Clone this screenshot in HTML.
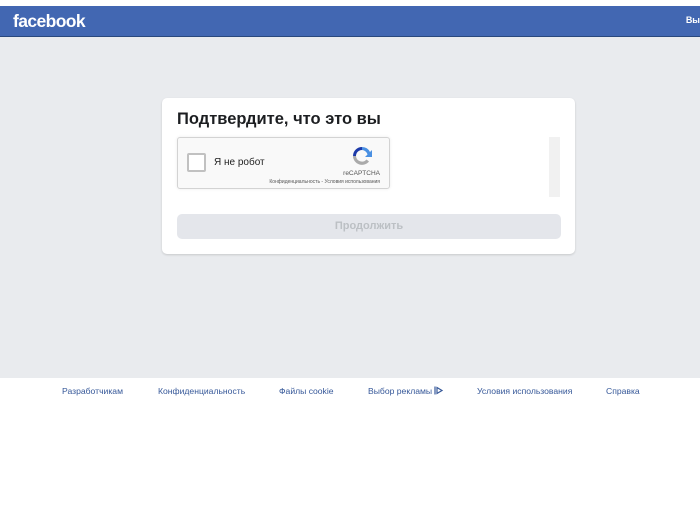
<!DOCTYPE html>
<html><head><meta charset="utf-8"><style>
*{margin:0;padding:0;box-sizing:border-box}
body{width:700px;height:509px;background:#fff;font-family:"Liberation Sans","Noto Sans CJK SC",sans-serif;position:relative;overflow:hidden}
.top{position:absolute;left:0;top:0;width:700px;height:6px;background:#fff}
.bar{position:absolute;left:0;top:6px;width:700px;height:31px;background:#4267b2;border-bottom:1px solid #29487d}
.logo{position:absolute;left:13px;top:5px;color:#fff;font-weight:bold;font-size:17.5px;letter-spacing:-0.6px}
.vy{position:absolute;right:0;top:9px;color:#fff;font-size:9px;font-weight:bold}
.gray{position:absolute;left:0;top:37px;width:700px;height:341px;background:#e9ebee}
.card{position:absolute;left:162px;top:98px;width:413px;height:156px;background:#fff;border-radius:5px;box-shadow:0 1px 2px rgba(0,0,0,.15)}
h1{position:absolute;left:15px;top:12px;font-size:16.5px;font-weight:bold;color:#1c1e21}
.rc{position:absolute;left:15px;top:39px;width:213px;height:52px;background:#f9f9f9;border:1px solid #d3d3d3;border-radius:3px;box-shadow:0 0 3px rgba(0,0,0,.08)}
.cb{position:absolute;left:9px;top:15px;width:19px;height:19px;background:#fff;border:2px solid #c1c1c1;border-radius:2px}
.rt{position:absolute;left:36px;top:19px;font-size:10px;color:#222}
.rl{position:absolute;right:9px;top:32px;font-size:6.5px;color:#555}
.rs{position:absolute;right:9px;top:41px;font-size:5px;color:#555}
.sb{position:absolute;left:387px;top:39px;width:11px;height:60px;background:#f1f1f1}
.btn{position:absolute;left:15px;top:116px;width:384px;height:25px;background:#e4e6eb;border-radius:5px;color:#bcc0c4;font-size:11px;font-weight:bold;text-align:center;line-height:25px}
.foot{position:absolute;top:386px;font-size:8.6px;color:#365899;white-space:nowrap}
</style></head><body>
<div class="top"></div>
<div class="bar"><div class="logo">facebook</div><div class="vy">Вы</div></div>
<div class="gray"></div>
<div class="card">
<h1>Подтвердите, что это вы</h1>
<div class="rc"><div class="cb"></div><div class="rt">Я не робот</div>
<svg style="position:absolute;left:172px;top:6px" width="24" height="24" viewBox="0 0 24 24"><path d="M12 3a9 9 0 0 1 8 5l2-2v7h-7l2.5-2.5A6 6 0 0 0 12 6z" fill="#4a90e2"/><path d="M12 3A9 9 0 0 0 3 12h3a6 6 0 0 1 6-6z" fill="#1c3aa9"/><path d="M3 12a9 9 0 0 0 16 5.5l-2.5-2A6 6 0 0 1 6 12z" fill="#aaa"/></svg>
<div class="rl">reCAPTCHA</div><div class="rs">Конфиденциальность - Условия использования</div></div>
<div class="sb"></div>
<div class="btn">Продолжить</div>
</div>
<div class="foot" style="left:62px">Разработчикам</div>
<div class="foot" style="left:158px">Конфиденциальность</div>
<div class="foot" style="left:279px">Файлы cookie</div>
<div class="foot" style="left:368px">Выбор рекламы <svg width="10" height="9" viewBox="0 0 10 9" style="vertical-align:-1px"><path d="M1 0.5v8M3 1.5l5 3-5 3z" stroke="#365899" stroke-width="1.2" fill="none"/></svg></div>
<div class="foot" style="left:477px">Условия использования</div>
<div class="foot" style="left:606px">Справка</div>
</body></html>
